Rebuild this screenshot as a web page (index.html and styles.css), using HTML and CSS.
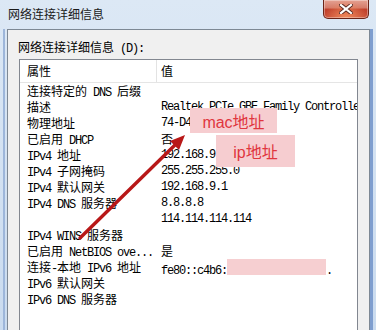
FILE: index.html
```html
<!DOCTYPE html>
<html lang="zh-CN">
<head>
	<meta charset="UTF-8">
	<title>网络连接详细信息</title>
	<link rel="stylesheet" href="styles.css">
</head>
<body>
	<div class="win">
		<div class="title">
			<span class="caption">网络连接详细信息</span>
			<span class="close">
				<svg width="14" height="10" viewBox="0 0 14 10">
					<path d="M2 1L12 9M12 1L2 9" stroke="#5a2a22" stroke-width="4" stroke-linecap="square"/>
					<path d="M2 1L12 9M12 1L2 9" stroke="#fff" stroke-width="2.2" stroke-linecap="square"/>
				</svg>
			</span>
		</div>
		<div class="panel">
			<p class="label">网络连接详细信息<span class="a"> (D):</span></p>
			<div class="list">
				<div class="head"><span class="k">属性</span><span class="v">值</span></div>
				<div class="row"><span class="k">连接特定的<span class="a"> DNS </span>后缀</span><span class="v"></span></div>
				<div class="row"><span class="k">描述</span><span class="v a">Realtek PCIe GBE Family Controller</span></div>
				<div class="row"><span class="k">物理地址</span><span class="v a">74-D4</span></div>
				<div class="row"><span class="k">已启用<span class="a"> DHCP</span></span><span class="v">否</span></div>
				<div class="row"><span class="k"><span class="a">IPv4 </span>地址</span><span class="v a">192.168.9</span></div>
				<div class="row"><span class="k"><span class="a">IPv4 </span>子网掩码</span><span class="v a">255.255.255.0</span></div>
				<div class="row"><span class="k"><span class="a">IPv4 </span>默认网关</span><span class="v a">192.168.9.1</span></div>
				<div class="row"><span class="k"><span class="a">IPv4 DNS </span>服务器</span><span class="v a">8.8.8.8</span></div>
				<div class="row"><span class="k"></span><span class="v a">114.114.114.114</span></div>
				<div class="row"><span class="k"><span class="a">IPv4 WINS </span>服务器</span><span class="v"></span></div>
				<div class="row"><span class="k">已启用<span class="a"> NetBIOS ove...</span></span><span class="v">是</span></div>
				<div class="row"><span class="k">连接<span class="a">-</span>本地<span class="a"> IPv6 </span>地址</span><span class="v a">fe80::c4b6:<span class="mask"></span>.</span></div>
				<div class="row"><span class="k"><span class="a">IPv6 </span>默认网关</span><span class="v"></span></div>
				<div class="row"><span class="k"><span class="a">IPv6 DNS </span>服务器</span><span class="v"></span></div>
			</div>
		</div>

		<!-- 标注 -->
		<div class="note mac">mac地址</div>
		<div class="note ip">ip地址</div>
		<svg class="arrow" width="376" height="330" viewBox="0 0 376 330">
			<line x1="80" y1="238" x2="176" y2="144" stroke="#b81818" stroke-width="3.4" stroke-linecap="round"/>
			<polygon points="185,135 179,150 170,141" fill="#b81818"/>
		</svg>
	</div>
</body>
</html>
```

FILE: styles.css
```css
*{
	margin: 0;
	padding: 0;
	box-sizing: border-box;
}
body{
	width: 376px;
	height: 330px;
	overflow: hidden;
	font: 12px "Noto Sans CJK SC", sans-serif;
	color: #000;
}
.win{
	position: relative;
	height: 330px;
	display: flex;
	flex-direction: column;
	background:
		linear-gradient(90deg, transparent 3px, #9db6da 3px, #9db6da 5px, transparent 5px) no-repeat 0 29px / 7px 100%,
		linear-gradient(90deg, #7f9ecf 0, #7f9ecf 3px, transparent 3px) no-repeat 370px 29px / 6px 100%,
		linear-gradient(#dce8f5, #cadbef);
}
.title{
	height: 29px;
	display: flex;
	align-items: flex-start;
}
.caption{
	margin: 6px 0 0 8px;
	line-height: 16px;
	color: #1a1a1a;
}
.close{
	margin-left: auto;
	margin-right: 7px;
	width: 46px;
	height: 19px;
	display: flex;
	align-items: center;
	justify-content: center;
	border: 1px solid #6b2418;
	border-top: 0;
	border-radius: 0 0 5px 5px;
	background:
		radial-gradient(ellipse at 50% 100%, #f08a5c 0, rgba(240,138,92,0) 70%),
		linear-gradient(#e5a293 0, #d47a69 45%, #c03f2b 50%, #c84d36 100%);
	box-shadow: inset 0 0 0 1px rgba(255,255,255,.35);
}
.panel{
	flex: 1;
	display: flex;
	flex-direction: column;
	margin: 0 6px 0 7px;
	border: 1px solid #7d8894;
	border-bottom: 0;
	background: #f0f0f0;
	min-height: 0;
}
.label{
	padding: 9px 0 0 10px;
	line-height: 16px;
}
.list{
	flex: 1;
	margin: 2px 11px 0 11px;
	border: 1px solid #828790;
	border-bottom: 0;
	background: #fff;
	overflow: hidden;
}
.head{
	display: flex;
	height: 23px;
	line-height: 22px;
	border-bottom: 1px solid #e5e5e5;
}
.head .k{
	border-right: 1px solid #e3e3e3;
}
.k{
	width: 137px;
	flex: none;
	padding-left: 7px;
	white-space: nowrap;
	overflow: hidden;
}
.v{
	flex: 1;
	padding-left: 4px;
	white-space: nowrap;
	overflow: hidden;
}
.row{
	display: flex;
	height: 16px;
	line-height: 16px;
}
.a{
	font-family: "Liberation Mono", monospace;
	letter-spacing: -1.2px;
}
.mask{
	display: inline-block;
	width: 99px;
	height: 18px;
	vertical-align: -3px;
	background: #f6cfd1;
}
.note{
	position: absolute;
	display: flex;
	align-items: center;
	justify-content: center;
	background: #f6cdd0;
	color: #e0363e;
	font: 16px "Liberation Sans", "Noto Sans CJK SC", sans-serif;
}
.mac{
	left: 190px;
	top: 108px;
	width: 87px;
	height: 25px;
}
.ip{
	left: 216px;
	top: 135px;
	width: 79px;
	height: 32px;
}
.arrow{
	position: absolute;
	left: 0;
	top: 0;
	pointer-events: none;
}
```
